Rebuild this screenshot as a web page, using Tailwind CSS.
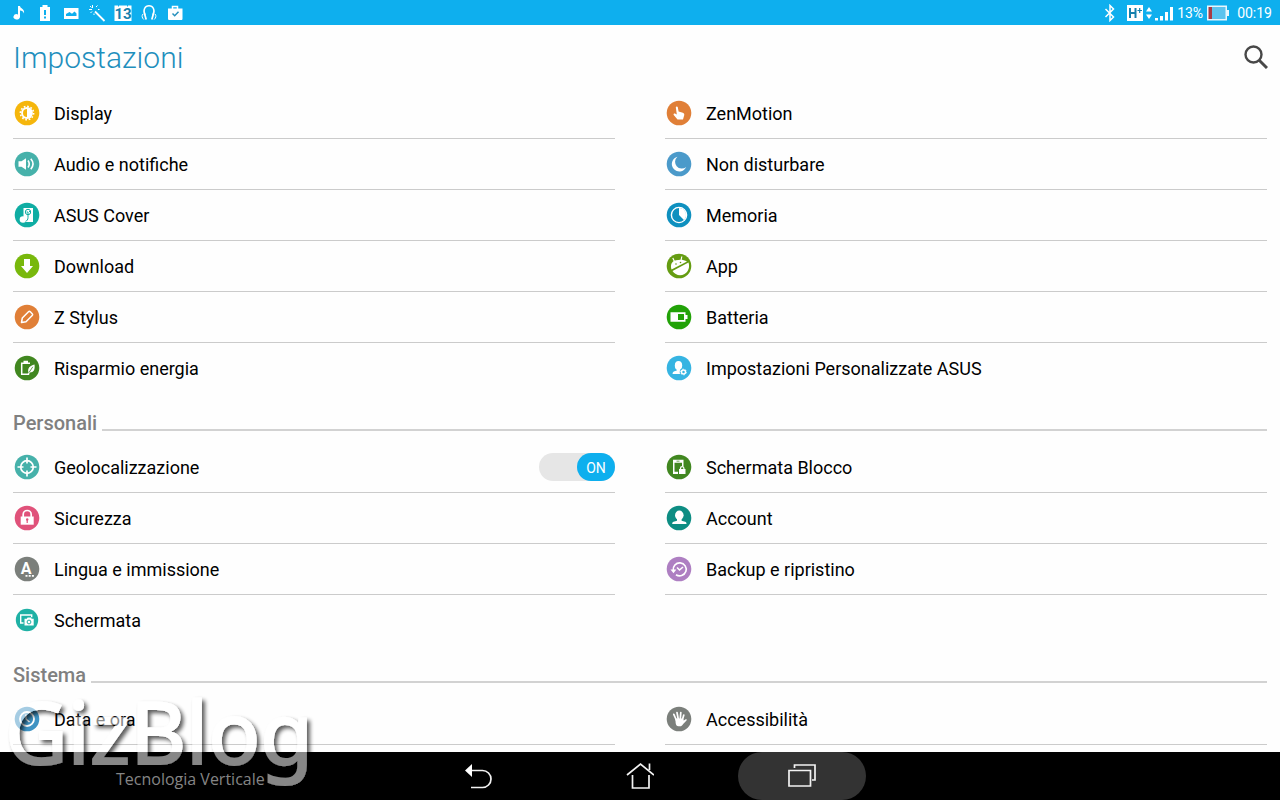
<!DOCTYPE html>
<html lang="it">
<head>
    <meta charset="UTF-8">
    <meta name="viewport" content="width=device-width, initial-scale=1.0">
    <title>Impostazioni</title>
    <script src="https://cdn.jsdelivr.net/npm/@tailwindcss/browser@4"></script>
</head>
<body class="relative h-screen flex flex-col overflow-hidden bg-[#fefefe] text-black font-['Roboto',sans-serif]">

    <!-- Status bar -->
    <div class="h-[25px] shrink-0 flex items-center justify-between bg-[#0eafee] pl-[10px] pr-2 text-white text-sm">
        <div class="flex items-center gap-2">
            <svg class="w-[18px] h-[18px]" viewBox="0 0 18 18" fill="currentColor"><path d="M8 2h2c.3 2.600 5 3 4 7.500-.6-1.800-2-2.700-4-2.900V13a3.300 2.700 0 1 1-2-2.600z"/></svg>
            <svg class="w-[18px] h-[18px]" viewBox="0 0 18 18" fill="currentColor"><path fill-rule="evenodd" d="M6.500 1h5v2H14v14H4V3h2.500zM8 6v5h2V6zm0 6.500v2h2v-2z"/></svg>
            <svg class="w-[18px] h-[18px]" viewBox="0 0 18 18" fill="currentColor"><path fill-rule="evenodd" d="M2 4h14.500v11H2zm2 8h10.500V9.500l-2-2-2.500 2.200L7.500 8 4 10z"/></svg>
            <svg class="w-[18px] h-[18px]" viewBox="0 0 18 18" stroke="currentColor" fill="none"><path stroke-width="1.800" d="M7 7.500l9.500 9.500"/><path stroke-width="1" d="M4.500 1v3M1 5.500h3M8 3l1.500-1.500M2.500 9L4 7.500M10 5.500h1.500M6 9.500V11M2 2l1.500 1.500"/></svg>
            <svg class="w-[18px] h-[18px]" viewBox="0 0 18 18"><path fill="#fff" d="M.5 1.500h17V17H.5z"/><path stroke="#0eafee" d="M4.500 0v2.500M13.500 0v2.500"/><text x="9" y="15" text-anchor="middle" font-size="15" font-weight="700" fill="#1580ad">13</text></svg>
            <svg class="w-[18px] h-[18px]" viewBox="0 0 18 18" stroke="currentColor" fill="none"><path stroke-width="1.500" d="M5 11C2.500 6 5 1.800 9 1.800S15.500 6 13 11"/><path stroke-width="1.700" d="M4.500 9.500l1.700 6M13.500 9.500l-1.700 6"/><path d="M3 10c-1.500 1.500-1 4 .8 5.500M15 10c1.500 1.500 1 4-.8 5.500"/></svg>
            <svg class="w-[18px] h-[18px]" viewBox="0 0 18 18" fill="none"><path fill="#fff" d="M2 4.500h14.500v10c0 1-.5 1.500-1.500 1.500H3.500C2.500 16 2 15.500 2 14.500z"/><path stroke="#fff" stroke-width="1.500" d="M6.500 5V2.500h5V5"/><path stroke="#2690bd" stroke-width="1.500" d="M6.500 9.500l2.200 2.200 3.800-4"/></svg>
        </div>
        <div class="flex items-center">
            <svg class="w-[12px] h-[18px] mr-[11px]" viewBox="0 0 12 18" fill="none" stroke="#fff" stroke-width="1.500"><path d="M1.500 5l8 8L6 16.500v-15L9.500 5l-8 8"/></svg>
            <svg class="w-[16px] h-[18px] mr-[3px]" viewBox="0 0 16 18"><path fill="#fff" d="M0 1h16v16H0z"/><path stroke="#1580ad" stroke-width="2" fill="none" d="M3 4v10M8.500 4v10M3 9h5.500"/><path stroke="#1580ad" stroke-width="1.200" d="M10.500 6.500h4.500M12.700 4v5"/></svg>
            <svg class="w-[6px] h-[18px] mr-[3px]" viewBox="0 0 6 18" fill="#fff"><path d="M0 7.500L3 3l3 4.500zM0 10.500h6L3 15z"/></svg>
            <svg class="w-[19px] h-[18px] mr-[3px]" viewBox="0 0 19 18" fill="#fff"><path d="M0 14h3v2.500H0zM5 12h3v4.500H5zM10 8h3v8.500h-3zM15 3h3v13.500h-3z"/></svg>
            <span class="mr-1">13%</span>
            <svg class="w-[22px] h-[18px] mr-2" viewBox="0 0 22 18"><path fill="#e8f6fc" d="M0 1.500h20V6h2v6h-2v4.500H0z"/><path fill="#5cc3ee" d="M5 3h13.500v12H5z"/><path fill="#a83a44" d="M1.500 3H5v12H1.500z"/></svg>
            <span>00:19</span>
        </div>
    </div>

    <!-- Header -->
    <header class="h-[63px] shrink-0 flex items-center justify-between px-[13px]">
        <h1 class="pt-[3px] text-[30px] leading-9 font-light text-[#1f8fbd]">Impostazioni</h1>
        <button type="button" aria-label="Cerca" class="-mr-px">
            <svg class="w-6 h-6" viewBox="0 0 24 24" fill="none" stroke="#484848"><circle cx="9.500" cy="9.500" r="8" stroke-width="2.400"/><path stroke-width="3" d="M15.200 15.200L23 23"/></svg>
        </button>
    </header>

    <!-- Settings list -->
    <main class="flex-1 min-h-0 overflow-hidden px-[13px] text-lg">
        <div class="grid grid-cols-2 gap-x-[50px]">
            <a href="#" class="h-[51px] flex items-center gap-[14px] pl-px border-b border-[#cbcbcb]">
                <svg class="w-[26px] h-[26px]" viewBox="0 0 26 26"><circle cx="13" cy="13" r="12.300" fill="#f5b60c"/><circle cx="13" cy="13" r="6.600" fill="none" stroke="#fff" stroke-width="1.600" stroke-dasharray="1.700 1.750"/><circle cx="13" cy="13" r="5.900" fill="#fff"/><path fill="#f5b60c" d="M13 9a4 4 0 0 0 0 8z"/></svg>
                <span class="pt-0.5">Display</span>
            </a>
            <a href="#" class="h-[51px] flex items-center gap-[14px] pl-px border-b border-[#cbcbcb]">
                <svg class="w-[26px] h-[26px]" viewBox="0 0 26 26"><circle cx="13" cy="13" r="12.300" fill="#e07f37"/><path fill="#fff" d="M9.800 7.200c.2-1 1.800-1 2 0l.8 4.300 4.200 1.300c1.300.5 1.700 1.300 1.400 2.500L17 19.500h-5.500L7.700 15c-.6-1.200.6-2 1.700-1.300l1.400.9z"/></svg>
                <span class="pt-0.5">ZenMotion</span>
            </a>
            <a href="#" class="h-[51px] flex items-center gap-[14px] pl-px border-b border-[#cbcbcb]">
                <svg class="w-[26px] h-[26px]" viewBox="0 0 26 26"><circle cx="13" cy="13" r="12.300" fill="#46b1aa"/><path fill="#fff" d="M4.500 10.300h3L12 7.300v11.400l-4.500-3h-3z"/><path fill="none" stroke="#fff" stroke-width="1.600" d="M14 9.500q2.500 3.500 0 7M16.800 7.800q4.500 5.200 0 10.400"/></svg>
                <span class="pt-0.5">Audio e notifiche</span>
            </a>
            <a href="#" class="h-[51px] flex items-center gap-[14px] pl-px border-b border-[#cbcbcb]">
                <svg class="w-[26px] h-[26px]" viewBox="0 0 26 26"><circle cx="13" cy="13" r="12.300" fill="#4b9aca"/><path fill="#fff" d="M11.500 5.700a7.500 7.500 0 1 0 8.700 10.300 6.700 6.700 0 0 1-8.700-10.300z"/></svg>
                <span class="pt-0.5">Non disturbare</span>
            </a>
            <a href="#" class="h-[51px] flex items-center gap-[14px] pl-px border-b border-[#cbcbcb]">
                <svg class="w-[26px] h-[26px]" viewBox="0 0 26 26"><circle cx="13" cy="13" r="12.300" fill="#0fada3"/><path fill="#fff" d="M9.500 6H19v14H9.500z"/><circle cx="9" cy="17.500" r="3.300" fill="#fff"/><circle cx="14" cy="10" r="2.700" fill="none" stroke="#0fada3" stroke-width="1"/><path fill="none" stroke="#0fada3" stroke-width="1" d="M12.500 10H14v5.500c0 2-1 3.500-2.500 3.800M15.500 9v1"/></svg>
                <span class="pt-0.5">ASUS Cover</span>
            </a>
            <a href="#" class="h-[51px] flex items-center gap-[14px] pl-px border-b border-[#cbcbcb]">
                <svg class="w-[26px] h-[26px]" viewBox="0 0 26 26"><circle cx="13" cy="13" r="12.300" fill="#0e90bf"/><circle cx="13" cy="13" r="7.600" fill="none" stroke="#fff" stroke-width="1.400"/><path fill="#fff" d="M13 6a7 7 0 0 1 4.900 12L13 13z"/></svg>
                <span class="pt-0.5">Memoria</span>
            </a>
            <a href="#" class="h-[51px] flex items-center gap-[14px] pl-px border-b border-[#cbcbcb]">
                <svg class="w-[26px] h-[26px]" viewBox="0 0 26 26"><circle cx="13" cy="13" r="12.300" fill="#78b80c"/><path fill="#fff" d="M10 6h6v7h3L13 20 7 13h3z"/></svg>
                <span class="pt-0.5">Download</span>
            </a>
            <a href="#" class="h-[51px] flex items-center gap-[14px] pl-px border-b border-[#cbcbcb]">
                <svg class="w-[26px] h-[26px]" viewBox="0 0 26 26"><circle cx="13" cy="13" r="12.300" fill="#659c12"/><path fill="#fff" d="M5.500 16.500C4 11.500 6 8 10 7.200c4.500-1 8-.5 11 1.300z"/><path fill="#fff" d="M6.500 18L22.500 9.500c1.500 4.500 0 9.300-4 11.500-4.300 2.400-9.500 1-12-3z"/><path stroke="#fff" stroke-width="1.200" d="M8.500 8.500L6.800 5M15 7.500l.8-4"/><circle cx="10" cy="11" r=".8" fill="#659c12"/><circle cx="14.500" cy="9.500" r=".8" fill="#659c12"/></svg>
                <span class="pt-0.5">App</span>
            </a>
            <a href="#" class="h-[51px] flex items-center gap-[14px] pl-px border-b border-[#cbcbcb]">
                <svg class="w-[26px] h-[26px]" viewBox="0 0 26 26"><circle cx="13" cy="13" r="12.300" fill="#e07f37"/><path fill="none" stroke="#fff" stroke-width="1.500" stroke-linejoin="round" d="M7.500 18.500l.8-4.500 6.200-6.200c.6-.6 1.200-.6 1.800 0l1.900 1.900c.6.6.6 1.200 0 1.800L12 17.700z"/></svg>
                <span class="pt-0.5">Z Stylus</span>
            </a>
            <a href="#" class="h-[51px] flex items-center gap-[14px] pl-px border-b border-[#cbcbcb]">
                <svg class="w-[26px] h-[26px]" viewBox="0 0 26 26"><circle cx="13" cy="13" r="12.300" fill="#22a208"/><path fill="#fff" fill-rule="evenodd" d="M4.500 8.300h15v2.700h2v4h-2v2.700h-15zm7.500 1.700v6h6v-6z"/></svg>
                <span class="pt-0.5">Batteria</span>
            </a>
            <a href="#" class="h-[51px] flex items-center gap-[14px] pl-px border-b border-transparent">
                <svg class="w-[26px] h-[26px]" viewBox="0 0 26 26"><circle cx="13" cy="13" r="12.300" fill="#418720"/><path fill="none" stroke="#fff" stroke-width="1.500" d="M16 8.200H7.700v11h7.500"/><path fill="#fff" d="M9.500 5.700h4.500v2.500H9.500zM20.500 9.500c.8 5-.8 8-4.500 8l-1.500 2.500-1-.6 1-2c-1.300-4 1.300-6.800 6-7.900z"/><path stroke="#418720" stroke-width=".8" d="M18.800 11.800L15 17.500"/></svg>
                <span class="pt-0.5">Risparmio energia</span>
            </a>
            <a href="#" class="h-[51px] flex items-center gap-[14px] pl-px border-b border-transparent">
                <svg class="w-[26px] h-[26px]" viewBox="0 0 26 26"><circle cx="13" cy="13" r="12.300" fill="#36b4e2"/><ellipse cx="12.500" cy="10.500" rx="3.700" ry="4.500" fill="#fff"/><path fill="#fff" d="M10.800 13h3.500v3l1 3H6.500c0-2.500 2-3 4.300-3.500z"/><circle cx="17.500" cy="17" r="3.800" fill="#36b4e2"/><circle cx="17.500" cy="17" r="2" fill="none" stroke="#fff" stroke-width="1.500"/><circle cx="17.500" cy="17" r="2.900" fill="none" stroke="#fff" stroke-width=".8" stroke-dasharray="1.500 1.500"/></svg>
                <span class="pt-0.5">Impostazioni Personalizzate ASUS</span>
            </a>
        </div>

        <!-- Personali -->
        <div class="h-12 flex items-start gap-[5px]">
            <h2 class="pt-[17px] text-xl leading-6 font-medium text-[#808080]">Personali</h2>
            <div class="flex-1 h-0.5 mt-[35px] bg-[#d2d2d2]"></div>
        </div>
        <div class="grid grid-cols-2 gap-x-[50px]">
            <div class="h-[51px] flex items-center justify-between border-b border-[#cbcbcb]">
                <a href="#" class="flex items-center gap-[14px] pl-px">
                    <svg class="w-[26px] h-[26px]" viewBox="0 0 26 26"><circle cx="13" cy="13" r="12.300" fill="#46b1aa"/><circle cx="13" cy="13" r="6.300" fill="none" stroke="#fff" stroke-width="1.700"/><path stroke="#fff" stroke-width="1.700" d="M13 3.500v6M13 16.500v6M3.500 13h6M16.500 13h6"/></svg>
                    <span id="geo" class="pt-0.5">Geolocalizzazione</span>
                </a>
                <label class="relative flex justify-end w-[76px] h-7 rounded-full bg-[#e6e6e6] cursor-pointer">
                    <input type="checkbox" checked aria-labelledby="geo" class="sr-only">
                    <span class="w-[38px] h-7 rounded-full bg-[#0eafee] text-white text-sm leading-[30px] text-center">ON</span>
                </label>
            </div>
            <a href="#" class="h-[51px] flex items-center gap-[14px] pl-px border-b border-[#cbcbcb]">
                <svg class="w-[26px] h-[26px]" viewBox="0 0 26 26"><circle cx="13" cy="13" r="12.300" fill="#418720"/><path fill="#fff" fill-rule="evenodd" d="M7 5.700h10.500V20H7zm1.500 3v9H16v-9z"/><path fill="#418720" d="M12 12h8v9h-8zM10.500 6.800h3v.8h-3z"/><path fill="#fff" d="M13 15h6.500v5H13z"/><path fill="none" stroke="#fff" stroke-width="1.200" d="M14.500 15.500v-1.200a1.700 1.700 0 0 1 3.400 0v1.200"/></svg>
                <span class="pt-0.5">Schermata Blocco</span>
            </a>
            <a href="#" class="h-[51px] flex items-center gap-[14px] pl-px border-b border-[#cbcbcb]">
                <svg class="w-[26px] h-[26px]" viewBox="0 0 26 26"><circle cx="13" cy="13" r="12.300" fill="#e0527a"/><path fill="#fff" d="M6.700 11.500h13v8.200h-13z"/><path fill="none" stroke="#fff" stroke-width="1.700" d="M9.200 12V9.500a4 4 0 0 1 8 0V12"/><circle cx="13.200" cy="14.500" r="1.200" fill="#e0527a"/><path fill="#e0527a" d="M12.600 15h1.200v3h-1.200z"/></svg>
                <span class="pt-0.5">Sicurezza</span>
            </a>
            <a href="#" class="h-[51px] flex items-center gap-[14px] pl-px border-b border-[#cbcbcb]">
                <svg class="w-[26px] h-[26px]" viewBox="0 0 26 26"><circle cx="13" cy="13" r="12.300" fill="#0d8d83"/><ellipse cx="13.300" cy="10.300" rx="4.300" ry="4.700" fill="#fff"/><path fill="#fff" d="M11 13.500h4.600v2.300l3.500 1c1.100.4 1.400 1.100 1.400 2.200H6.200c0-1.100.4-1.800 1.400-2.200l3.400-1z"/></svg>
                <span class="pt-0.5">Account</span>
            </a>
            <a href="#" class="h-[51px] flex items-center gap-[14px] pl-px border-b border-[#cbcbcb]">
                <svg class="w-[26px] h-[26px]" viewBox="0 0 26 26"><circle cx="13" cy="13" r="12.300" fill="#7b7f7b"/><text x="12" y="18" text-anchor="middle" font-size="16" font-weight="700" fill="#fff">A</text><path fill="#fff" d="M11.500 19h2v1.800h-2zM14.700 19h2v1.800h-2zM17.900 19h2v1.800h-2z"/></svg>
                <span class="pt-0.5">Lingua e immissione</span>
            </a>
            <a href="#" class="h-[51px] flex items-center gap-[14px] pl-px border-b border-[#cbcbcb]">
                <svg class="w-[26px] h-[26px]" viewBox="0 0 26 26"><circle cx="13" cy="13" r="12.300" fill="#ae7fc2"/><path fill="none" stroke="#fff" stroke-width="1.700" d="M7.300 14.500a6.500 6.500 0 1 1 2.700 4.200"/><path fill="#fff" d="M4.500 13.500h5.900L7.500 17.200z"/><path fill="none" stroke="#fff" stroke-width="1.600" d="M11 11.500l2.500 2.500 3.500-3"/></svg>
                <span class="pt-0.5">Backup e ripristino</span>
            </a>
            <a href="#" class="h-[51px] flex items-center gap-[14px] pl-px border-b border-transparent">
                <svg class="w-[26px] h-[26px]" viewBox="0 0 26 26"><circle cx="13" cy="13" r="11.200" fill="#1fb1a5"/><path fill="none" stroke="#fff" stroke-width="1.400" d="M9.500 16H6.700V8h11v2.300"/><path fill="#fff" d="M10.500 11.800h2.300l.8-1.300h3.300l.8 1.300h2v6.700h-9.200z"/><circle cx="15" cy="15" r="1.900" fill="none" stroke="#1fb1a5"/></svg>
                <span class="pt-0.5">Schermata</span>
            </a>
        </div>

        <!-- Sistema -->
        <div class="h-12 flex items-start gap-[5px]">
            <h2 class="pt-[17px] text-xl leading-6 font-medium text-[#808080]">Sistema</h2>
            <div class="flex-1 h-0.5 mt-[35px] bg-[#d2d2d2]"></div>
        </div>
        <div class="grid grid-cols-2 gap-x-[50px]">
            <a href="#" class="h-[51px] flex items-center gap-[14px] pl-px border-b border-[#cbcbcb]">
                <svg class="w-[26px] h-[26px]" viewBox="0 0 26 26"><circle cx="13" cy="13" r="12.300" fill="#3f93c3"/><circle cx="13" cy="13" r="7" fill="none" stroke="#fff" stroke-width="1.800"/><path fill="none" stroke="#fff" stroke-width="1.500" d="M12 8.500V13l3.500 3"/></svg>
                <span class="pt-0.5">Data e ora</span>
            </a>
            <a href="#" class="h-[51px] flex items-center gap-[14px] pl-px border-b border-[#cbcbcb]">
                <svg class="w-[26px] h-[26px]" viewBox="0 0 26 26"><circle cx="13" cy="13" r="12.300" fill="#7b7f7b"/><path fill="none" stroke="#fff" stroke-width="1.700" stroke-linecap="round" d="M10.300 14L7.800 8.300M12.200 13L11 6.500M14.300 13l.5-6.500M16.300 14l1.500-5"/><path fill="#fff" d="M9.300 12.500h7.700l.7 2 2-1.200c1-.3 1.400.5.8 1.200L17.200 18c-1 1.500-1.900 2.300-3.200 2.300h-1.500c-1.700 0-2.500-1-2.800-3z"/></svg>
                <span class="pt-0.5">Accessibilità</span>
            </a>
        </div>
    </main>

    <!-- Navigation bar -->
    <nav class="h-12 shrink-0 flex justify-center gap-[34px] bg-black">
        <button type="button" aria-label="Indietro" class="w-32 h-12 flex items-center justify-center">
            <svg class="w-7 h-7" viewBox="0 0 28 28" fill="none" stroke="#f2f2f2" stroke-width="1.700"><path d="M6 8.500h12.500a8.500 8.500 0 0 1 0 17H7"/><path fill="#fff" stroke="none" d="M1 8.500L8 2v13z"/></svg>
        </button>
        <button type="button" aria-label="Home" class="w-32 h-12 flex items-center justify-center">
            <svg class="w-7 h-7" viewBox="0 0 28 28" fill="none" stroke="#f2f2f2" stroke-width="1.700"><path d="M1 13L14.500 2 28 13M6.500 13v13h16.500V13M23.500 8V1.500"/></svg>
        </button>
        <button type="button" aria-label="App recenti" class="w-32 h-12 flex items-center justify-center rounded-full bg-[#333]">
            <svg class="w-7 h-7" viewBox="0 0 28 28" fill="none" stroke="#f2f2f2" stroke-width="1.700"><path d="M1 8.500h21.500V24H1zM6.500 6V3H27v15h-3"/></svg>
        </button>
    </nav>

    <!-- Watermark, its shadow is cut out under the letters -->
    <svg class="absolute left-0 bottom-0 w-[330px] h-[120px] pointer-events-none" viewBox="0 0 330 120">
        <filter id="knockout" x="-5%" y="-10%" width="115%" height="130%">
            <feGaussianBlur in="SourceAlpha" stdDeviation="2"/>
            <feOffset dx="3" dy="3"/>
            <feComposite in2="SourceAlpha" operator="out" result="shadow"/>
            <feComponentTransfer in="shadow" result="soft"><feFuncA type="linear" slope=".65"/></feComponentTransfer>
            <feComponentTransfer in="SourceGraphic" result="glyphs"><feFuncA type="linear" slope=".53"/></feComponentTransfer>
            <feMerge><feMergeNode in="soft"/><feMergeNode in="glyphs"/></feMerge>
        </filter>
        <text x="5" y="84" class="font-['Noto_Sans',sans-serif]" font-size="86" fill="#fff" stroke="#fff" stroke-width="2" filter="url(#knockout)">GizBlog</text>
        <text x="116" y="105" class="font-['Open_Sans',sans-serif]" font-size="16" fill="#858585">Tecnologia Verticale</text>
    </svg>

</body>
</html>
